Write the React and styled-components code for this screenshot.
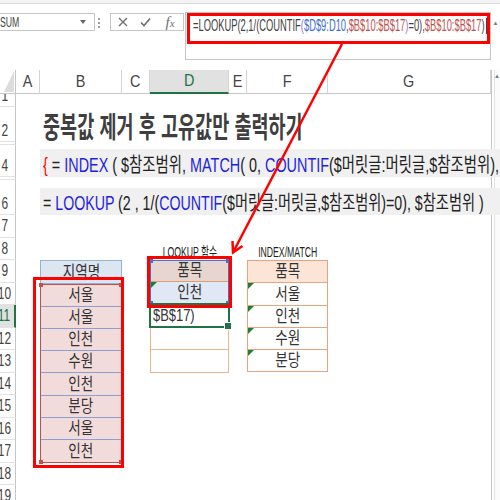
import styled, { createGlobalStyle, css } from "styled-components";

const FONT = `"Liberation Sans", "Noto Sans CJK KR", sans-serif`;

const GlobalStyle = createGlobalStyle`
  html, body { margin: 0; padding: 0; background: #ffffff; }
  body { font-family: ${FONT}; overflow: hidden; }
  * { box-sizing: border-box; }
`;

const Page = styled.div`
  position: relative;
  width: 500px;
  height: 500px;
  overflow: hidden;
  background: #fff;
`;

// the screenshot is horizontally squeezed, so text is condensed with scaleX
const Narrow = styled.span`
  display: inline-block;
  white-space: nowrap;
  transform: scaleX(${(p) => p.$sx ?? 0.75});
  transform-origin: ${(p) => (p.$left ? "left center" : "center")};
`;

const Tok = styled.span`
  color: ${(p) => p.$c};
`;

/* ---------- formula bar ---------- */

const RibbonEdge = styled.div`
  height: 4px;
  background: #f3f3f3;
  border-bottom: 1px solid #dcdcdc;
`;

const FormulaBar = styled.div`
  display: flex;
  align-items: flex-start;
  height: 66px;
  padding-top: 8px;
`;

const NameBox = styled.div`
  display: flex;
  align-items: center;
  justify-content: space-between;
  width: 101px;
  height: 18px;
  margin: 1px 0 0 -6px;
  padding: 0 8px 0 5px;
  border: 1px solid #c6c6c6;
  color: #444;
  font-size: 14px;
`;

const Caret = styled.span`
  width: 0;
  height: 0;
  border-left: 3px solid transparent;
  border-right: 3px solid transparent;
  border-top: 4px solid #666;
`;

const Dots = styled.div`
  display: flex;
  flex-direction: column;
  align-items: center;
  gap: 2px;
  width: 4px;
  margin: 6px 9px 0 2px;

  span {
    width: 2px;
    height: 2px;
    background: #a0a0a0;
  }
`;

const ButtonsBox = styled.div`
  display: flex;
  width: 74px;
  height: 18px;
  margin-top: 1px;
  border: 1px solid #c6c6c6;
`;

const IconSlot = styled.div`
  display: flex;
  align-items: center;
  justify-content: center;
  width: ${(p) => p.$w}px;
  color: #6e6e6e;
`;

const Fx = styled.span`
  font-family: "Liberation Serif", serif;
  font-style: italic;
  font-size: 15px;
  line-height: 16px;
  color: #6e6e6e;

  small {
    font-size: 11px;
  }
`;

const FormulaBox = styled.div`
  width: 306px;
  height: 48px;
  margin-left: 1px;
  padding-left: 1px;
  border: 1px solid #c6c6c6;
`;

const FormulaEdit = styled.div`
  width: 303px;
  height: 31px;
  padding: 0 0 0 3px;
  border: 3px solid #ff0000;
  overflow: hidden;
  font-size: 17px;
  line-height: 20px;
  color: #404040;
`;

const TextCursor = styled.span`
  display: inline-block;
  width: 2px;
  height: 16px;
  margin-left: 3px;
  vertical-align: -3px;
  background: #222;
`;

const FormulaScroll = styled.div`
  display: flex;
  justify-content: center;
  width: 9px;
  padding-top: 8px;
  font-size: 6px;
  color: #777;
`;

/* ---------- sheet ---------- */

const Sheet = styled.div`
  display: grid;
  grid-template-columns: 16px 24px 82px 28px 79px 18px 81px 163px 9px;
  grid-template-rows: 24px 13px 35px 3px 32px 3px 35px repeat(13, 22.5px);
`;

const VScroll = styled.div`
  grid-column: 9;
  grid-row: 1 / -1;
  display: flex;
  justify-content: center;
  padding: 3px 0 0 2px;
  border-left: 1px solid #c6c6c6;
  box-shadow: inset 2px 0 0 #fff, inset 3px 0 0 #e2e2e2;
  background: #fbfbfb;
  font-size: 6px;
  color: #7a7a7a;
`;

const Corner = styled.div`
  grid-column: 1;
  grid-row: 1;
  position: relative;
  border-right: 1px solid #c6c6c6;
  border-bottom: 1px solid #c6c6c6;

  &::after {
    content: "";
    position: absolute;
    right: 1px;
    bottom: 1px;
    border-left: 10px solid transparent;
    border-bottom: 21px solid #dcdcdc;
  }
`;

const ColHeader = styled.div`
  grid-column: ${(p) => p.$col};
  grid-row: 1;
  display: flex;
  align-items: center;
  justify-content: center;
  border-right: 1px solid #d4d4d4;
  border-bottom: ${(p) => (p.$active ? "2px solid #217346" : "1px solid #c6c6c6")};
  background: ${(p) => (p.$active ? "#e1e1e1" : "#fff")};
  color: ${(p) => (p.$active ? "#217346" : "#444")};
  font-size: 17px;
`;

const RowHeader = styled.div`
  grid-column: 1;
  grid-row: ${(p) => p.$row + 1};
  display: flex;
  align-items: flex-end;
  justify-content: center;
  padding: 0 6px 1.5px 0;
  overflow: hidden;
  font-size: 17px;
  line-height: 18px;
  color: ${(p) => (p.$active ? "#217346" : "#444")};
  background: ${(p) => (p.$active ? "#e1e1e1" : "#fff")};
  border-bottom: 1px solid #e2e2e2;
  border-right: ${(p) => (p.$active ? "2px solid #217346" : "1px solid #c6c6c6")};
`;

const Title = styled.div`
  grid-column: 3 / 9;
  grid-row: 3;
  display: flex;
  align-items: center;
  padding-left: 3px;
  font-size: 29px;
  font-weight: 700;
  color: #3f3f3f;
`;

const Band = styled.div`
  grid-column: 3 / 10;
  grid-row: ${(p) => p.$row};
  display: flex;
  align-items: center;
  margin-top: ${(p) => p.$top}px;
  padding-left: 3px;
  background: #f0f0f0;
  overflow: hidden;
  white-space: nowrap;
  font-size: 20px;
  color: #222;
`;

const TableLabel = styled.div`
  grid-column: ${(p) => p.$col};
  grid-row: 9;
  display: flex;
  align-items: flex-end;
  justify-content: center;
  font-size: 14px;
  line-height: 16px;
  color: #222;
`;

const Table = styled.div`
  grid-column: ${(p) => p.$col};
  grid-row: ${(p) => p.$rows};
  display: flex;
  flex-direction: column;
`;

const Cell = styled.div`
  flex: 1 1 0;
  position: relative;
  display: flex;
  align-items: flex-end;
  justify-content: ${(p) => (p.$left ? "flex-start" : "center")};
  padding: 0 2px;
  background: ${(p) => p.$bg || "#fff"};
  border: 1px solid ${(p) => p.$line};
  border-top-width: ${(p) => (p.$first ? 1 : 0)}px;
  font-size: 17px;
  line-height: 20px;
  color: #333;

  ${(p) =>
    p.$flag &&
    css`
      &::before {
        content: "";
        position: absolute;
        top: 0;
        left: 0;
        border-top: 6px solid #1e7e34;
        border-right: 6px solid transparent;
      }
    `}
`;

const ActiveCell = styled(Cell)`
  z-index: 1;
  outline: 2px solid #217346;
  outline-offset: -1px;

  &::after {
    content: "";
    position: absolute;
    right: -4px;
    bottom: -4px;
    width: 6px;
    height: 6px;
    background: #217346;
    border: 1px solid #fff;
  }
`;

const RefRange = styled.div`
  flex: ${(p) => p.$span} 1 0;
  position: relative;
  display: flex;
  flex-direction: column;
`;

const RefFrame = styled.div`
  position: absolute;
  inset: 0;
  z-index: 1;
  border: 1px solid ${(p) => p.$color};
  pointer-events: none;
`;

const Handle = styled.span`
  position: absolute;
  width: 4px;
  height: 4px;
  background: ${(p) => p.$color};
  ${(p) => (p.$at.includes("t") ? "top: -2px;" : "bottom: -2px;")}
  ${(p) => (p.$at.includes("l") ? "left: -2px;" : "right: -2px;")}
`;

const RedBox = styled.div`
  position: absolute;
  top: ${(p) => p.$t}px;
  right: ${(p) => p.$r}px;
  bottom: ${(p) => p.$b}px;
  left: ${(p) => p.$l}px;
  z-index: 2;
  border: 3px solid #ff0000;
  pointer-events: none;
`;

const Annotation = styled.svg`
  position: absolute;
  top: 0;
  left: 0;
  z-index: 5;
  width: 500px;
  height: 500px;
  pointer-events: none;
`;

const COLUMNS = ["A", "B", "C", "D", "E", "F", "G"];
const ROW_COUNT = 19;
const REGIONS = ["서울", "서울", "인천", "수원", "인천", "분당", "서울", "인천"];
const UNIQUE = ["서울", "인천", "수원", "분당"];

const BLUE = "#1f1fe0";
const DARK_RED = "#c0504d";

function Frame({ color }) {
  return (
    <RefFrame $color={color}>
      {["tl", "tr", "bl", "br"].map((at) => (
        <Handle key={at} $at={at} $color={color} />
      ))}
    </RefFrame>
  );
}

function Txt({ children, sx = 0.8, left }) {
  return (
    <Narrow $sx={sx} $left={left}>
      {children}
    </Narrow>
  );
}

export default function App() {
  return (
    <Page>
      <GlobalStyle />
      <RibbonEdge />

      <FormulaBar>
        <NameBox>
          <Txt sx={0.62} left>
            SUM
          </Txt>
          <Caret />
        </NameBox>
        <Dots>
          <span />
          <span />
          <span />
        </Dots>
        <ButtonsBox>
          <IconSlot $w={23}>
            <svg width="10" height="10" viewBox="0 0 10 10">
              <path d="M1 1 L9 9 M9 1 L1 9" stroke="currentColor" strokeWidth="1.3" fill="none" />
            </svg>
          </IconSlot>
          <IconSlot $w={23}>
            <svg width="11" height="10" viewBox="0 0 11 10">
              <path d="M1 5.5 L4 8.5 L10 1.5" stroke="currentColor" strokeWidth="1.6" fill="none" />
            </svg>
          </IconSlot>
          <IconSlot $w={26}>
            <Fx>
              f<small>x</small>
            </Fx>
          </IconSlot>
        </ButtonsBox>
        <FormulaBox>
          <FormulaEdit>
            <Txt sx={0.55} left>
              =LOOKUP(2,1/(COUNTIF
              <Tok $c="#9b6fcf">(</Tok>
              <Tok $c="#3d6fd0">$D$9:D10</Tok>,
              <Tok $c={DARK_RED}>$B$10:$B$17</Tok>
              <Tok $c="#9b6fcf">)</Tok>
              =0),
              <Tok $c={DARK_RED}>$B$10:$B$17</Tok>)
              <TextCursor />
            </Txt>
          </FormulaEdit>
        </FormulaBox>
        <FormulaScroll>▲</FormulaScroll>
      </FormulaBar>

      <Sheet>
        <VScroll>▲</VScroll>
        <Corner />
        {COLUMNS.map((c, i) => (
          <ColHeader key={c} $col={i + 2} $active={c === "D"}>
            <Txt sx={0.85}>{c}</Txt>
          </ColHeader>
        ))}
        {Array.from({ length: ROW_COUNT }, (_, i) => (
          <RowHeader key={i} $row={i + 1} $active={i + 1 === 11}>
            <Txt sx={0.7}>{i + 1}</Txt>
          </RowHeader>
        ))}

        <Title>
          <Txt sx={0.64} left>
            중복값 제거 후 고유값만 출력하기
          </Txt>
        </Title>

        <Band $row={5} $top={4}>
          <Txt sx={0.72} left>
            <Tok $c="#ff0000">{"{"}</Tok> = <Tok $c={BLUE}>INDEX</Tok> ( $참조범위,{" "}
            <Tok $c={BLUE}>MATCH</Tok>( 0, <Tok $c={BLUE}>COUNTIF</Tok>($머릿글:머릿글,$참조범위),{" "}
            <Tok $c="#d9a441">(</Tok> 0 ) <Tok $c="#ff0000">{"}"}</Tok>
          </Txt>
        </Band>

        <Band $row={7} $top={8}>
          <Txt sx={0.71} left>
            = <Tok $c={BLUE}>LOOKUP</Tok> (2 , 1/(<Tok $c={BLUE}>COUNTIF</Tok>
            ($머릿글:머릿글,$참조범위)=0), $참조범위 )
          </Txt>
        </Band>

        <TableLabel $col={5}>
          <Txt sx={0.62}>LOOKUP 함수</Txt>
        </TableLabel>
        <TableLabel $col={7}>
          <Txt sx={0.62}>INDEX/MATCH</Txt>
        </TableLabel>

        <Table $col={3} $rows="10 / 19">
          <Cell $first $bg="#dce6f1" $line="#95b3d7">
            <Txt>지역명</Txt>
          </Cell>
          <RefRange $span={8}>
            {REGIONS.map((r, i) => (
              <Cell key={i} $bg="#f2dcdb" $line="#8c9fcf">
                <Txt>{r}</Txt>
              </Cell>
            ))}
            <Frame color={DARK_RED} />
            <RedBox $t={-7.5} $r={-2} $b={-5.5} $l={-7} />
          </RefRange>
        </Table>

        <Table $col={5} $rows="10 / 15">
          <RefRange $span={2}>
            <Cell $first $bg="#e6d6cf" $line="#dd9c74">
              <Txt>품목</Txt>
            </Cell>
            <Cell $flag $bg="#dfe8f4" $line="#dd9c74">
              <Txt>인천</Txt>
            </Cell>
            <Frame color="#4472c4" />
            <RedBox $t={-4} $r={-3} $b={-4} $l={-3} />
          </RefRange>
          <ActiveCell $left $line="#f0b48a">
            <Txt sx={0.76} left>
              $B$17)
            </Txt>
          </ActiveCell>
          <Cell $line="#f0b48a" />
          <Cell $line="#f0b48a" />
        </Table>

        <Table $col={7} $rows="10 / 15">
          <Cell $first $bg="#fce4d6" $line="#e8a47c">
            <Txt>품목</Txt>
          </Cell>
          {UNIQUE.map((u) => (
            <Cell key={u} $flag $line="#e8a47c">
              <Txt>{u}</Txt>
            </Cell>
          ))}
        </Table>
      </Sheet>

      <Annotation viewBox="0 0 500 500">
        <line x1="342" y1="44" x2="233.5" y2="251.5" stroke="#ff0000" strokeWidth="2.5" />
        <polyline
          points="242.5,246 233,252.5 232.5,241"
          fill="none"
          stroke="#ff0000"
          strokeWidth="2.5"
          strokeLinejoin="miter"
        />
      </Annotation>
    </Page>
  );
}
